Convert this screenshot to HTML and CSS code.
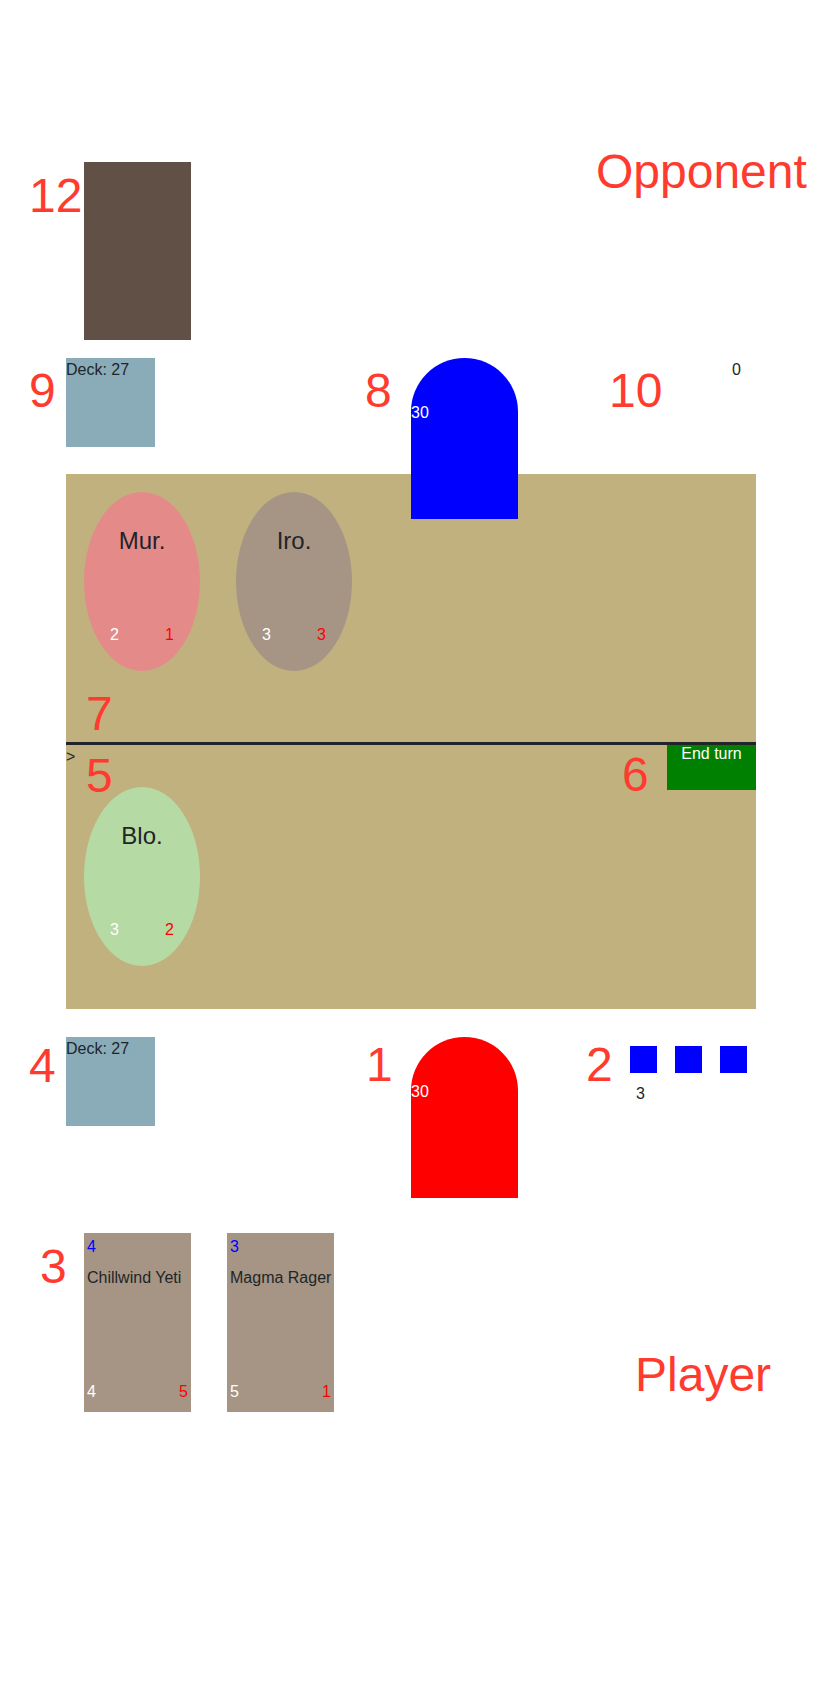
FILE: index.html
```html
<!DOCTYPE html>
<html lang="en">
<head>
  <meta charset="UTF-8">
  <title>Card game board</title>
  <link rel="stylesheet" href="styles.css">
</head>
<body>
  <div class="game">
    <!--对手手牌-->
    <div class="hand opp-hand">
      <div class="card-back"></div>
    </div>
    <!--对手：牌库 / 英雄 / 法力-->
    <div class="hero-row opp-row">
      <div class="half">
        <div class="deck">Deck: 27</div>
      </div>
      <div class="half half-right">
        <div class="hero opp-hero">30</div>
        <div class="mana">
          <div class="crystals"></div>
          <div class="mana-count">0</div>
        </div>
      </div>
    </div>
    <!--战场-->
    <div class="board">
      <div class="side opp-side">
        <div class="minions">
          <div class="minion murloc">
            <div class="minion-name">Mur.</div>
            <div class="stats"><span class="atk">2</span><span class="hp">1</span></div>
          </div>
          <div class="minion ironfur">
            <div class="minion-name">Iro.</div>
            <div class="stats"><span class="atk">3</span><span class="hp">3</span></div>
          </div>
        </div>
      </div>
      <div class="side my-side">
        <a class="end-turn" href="javascript:;">End turn</a>
        <div class="target">&gt;</div>
        <div class="minions">
          <div class="minion bloodfen">
            <div class="minion-name">Blo.</div>
            <div class="stats"><span class="atk">3</span><span class="hp">2</span></div>
          </div>
        </div>
      </div>
    </div>
    <!--玩家：牌库 / 英雄 / 法力-->
    <div class="hero-row my-row">
      <div class="half">
        <div class="deck">Deck: 27</div>
      </div>
      <div class="half half-right">
        <div class="hero my-hero">30</div>
        <div class="mana">
          <div class="crystals">
            <span class="crystal"></span>
            <span class="crystal"></span>
            <span class="crystal"></span>
          </div>
          <div class="mana-count">3</div>
        </div>
      </div>
    </div>
    <!--玩家手牌-->
    <div class="hand my-hand">
      <div class="card">
        <div class="cost">4</div>
        <div class="card-name">Chillwind Yeti</div>
        <div class="card-stats"><span class="atk">4</span><span class="hp">5</span></div>
      </div>
      <div class="card">
        <div class="cost">3</div>
        <div class="card-name">Magma Rager</div>
        <div class="card-stats"><span class="atk">5</span><span class="hp">1</span></div>
      </div>
    </div>
  </div>

  <!--标注层-->
  <div class="notes">
    <span class="note note-opp">Opponent</span>
    <span class="note n12">12</span>
    <span class="note n9">9</span>
    <span class="note n8">8</span>
    <span class="note n10">10</span>
    <span class="note n7">7</span>
    <span class="note n5">5</span>
    <span class="note n6">6</span>
    <span class="note n4">4</span>
    <span class="note n1">1</span>
    <span class="note n2">2</span>
    <span class="note n3">3</span>
    <span class="note note-player">Player</span>
  </div>
</body>
</html>
```

FILE: styles.css
```css
*{
  margin: 0;
  padding: 0;
  box-sizing: border-box;
}
body{
  font-family: "Liberation Sans", Arial, sans-serif;
  font-size: 16px;
  line-height: 1.5;
  color: #212529;
  background: #fff;
}
.game{
  padding: 162px 66px 0;
}
.hand{
  display: flex;
}
.card-back{
  width: 107px;
  height: 178px;
  margin: 0 18px;
  background: #615046;
}
.hero-row{
  display: flex;
}
.opp-row{
  margin-top: 18px;
  height: 116px;
}
.my-row{
  margin-top: 28px;
}
.half{
  flex: 1;
}
.half-right{
  display: flex;
  justify-content: space-between;
  align-items: flex-start;
}
.deck{
  width: 89px;
  height: 89px;
  background: #8aacb8;
}
.hero{
  width: 107px;
  height: 161px;
  padding-top: 43px;
  border-radius: 53.5px 53.5px 0 0;
  color: #fff;
  /*英雄压在战场上面*/
  position: relative;
  z-index: 1;
}
.opp-hero{
  background: #0000ff;
}
.my-hero{
  background: #ff0000;
}
.crystals{
  display: flex;
}
.crystal{
  width: 27px;
  height: 27px;
  margin: 9px;
  background: #0000ff;
}
.mana-count{
  padding: 0 15px;
}
.board{
  background: #c1b17f;
}
.opp-side{
  height: 271px;
  border-bottom: 3px solid #212529;
}
.my-side{
  height: 264px;
}
.minions{
  display: flex;
}
.minion{
  width: 116px;
  height: 179px;
  margin: 18px 18px 0;
  border-radius: 50%;
  display: flex;
  flex-direction: column;
  align-items: center;
  padding: 35px 0 24px;
}
.murloc{
  background: #e48b8a;
}
.ironfur{
  background: #a69584;
}
.bloodfen{
  background: #b6daa4;
}
.minion-name{
  font-size: 24px;
  line-height: 1.2;
}
.stats{
  margin-top: auto;
  width: 100%;
  display: flex;
  justify-content: space-between;
  padding: 0 26px;
}
.atk{
  color: #fff;
}
.hp{
  color: #ff0000;
}
.end-turn{
  float: right;
  width: 89px;
  height: 45px;
  background: #008000;
  color: #fff;
  text-align: center;
  line-height: normal;
  text-decoration: none;
}
.my-hand{
  margin-top: 35px;
}
.card{
  width: 107px;
  height: 179px;
  margin: 0 18px;
  padding: 2px 3px 8px;
  background: #a69584;
  display: flex;
  flex-direction: column;
}
.cost{
  color: #0000ff;
}
.card-name{
  margin-top: 7px;
  white-space: nowrap;
}
.card-stats{
  margin-top: auto;
  display: flex;
  justify-content: space-between;
}
/*标注*/
.note{
  position: absolute;
  font-family: "Liberation Sans", Arial, sans-serif;
  font-size: 48px;
  line-height: 48px;
  color: #ff3b30;
}
.note-opp{ left: 596px; top: 148px; }
.n12{ left: 29px; top: 172px; }
.n9{ left: 29px; top: 367px; }
.n8{ left: 365px; top: 367px; }
.n10{ left: 609px; top: 367px; }
.n7{ left: 86px; top: 690px; }
.n5{ left: 86px; top: 752px; }
.n6{ left: 622px; top: 751px; }
.n4{ left: 29px; top: 1042px; }
.n1{ left: 366px; top: 1041px; }
.n2{ left: 586px; top: 1041px; }
.n3{ left: 40px; top: 1243px; }
.note-player{ left: 635px; top: 1351px; }
```
